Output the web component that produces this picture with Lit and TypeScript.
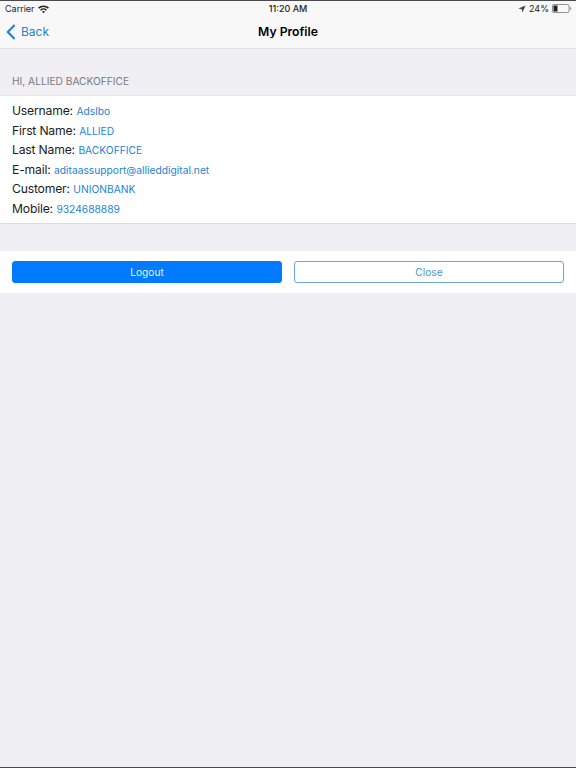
import { LitElement, html, css } from "lit";
import { customElement } from "lit/decorators.js";

const rows: [string, string][] = [
  ["Username:", "Adslbo"],
  ["First Name:", "ALLIED"],
  ["Last Name:", "BACKOFFICE"],
  ["E-mail:", "aditaassupport@allieddigital.net"],
  ["Customer:", "UNIONBANK"],
  ["Mobile:", "9324688889"],
];

@customElement("app-root")
export class AppRoot extends LitElement {
  static styles = css`
    :host {
      display: flex;
      flex-direction: column;
      height: 768px;
      box-sizing: border-box;
      background: #f0eff4;
      border-top: 1px solid #4a4a4c;
      border-bottom: 1px solid #4a4a4c;
      font-family: Inter, "Liberation Sans", sans-serif;
      color: #000;
      overflow: hidden;
    }
    .top {
      background: #f8f8f9;
      border-bottom: 1px solid #e2e2e4;
      height: 48px;
      box-sizing: border-box;
    }
    .status {
      height: 15px;
      display: grid;
      grid-template-columns: 1fr auto 1fr;
      align-items: center;
      padding: 0 5px;
      font-size: 9px;
      color: #222;
    }
    .status .left, .status .right { display: flex; align-items: center; }
    .status .left { gap: 3px; }
    .status .right { gap: 3px; justify-content: flex-end; margin-right: -1px; }
    .status .time { font-weight: 500; }
    .nav {
      height: 31px;
      display: grid;
      grid-template-columns: 1fr auto 1fr;
      align-items: center;
      padding: 0 6px;
    }
    .back {
      display: flex;
      align-items: center;
      gap: 5px;
      color: #2384d8;
      font-size: 12px;
    }
    .title { font-size: 12.2px; font-weight: 600; }
    .section {
      padding: 26px 12px 0;
      font-size: 10.2px;
      line-height: 12px;
      color: #7a7a7f;
      height: 46px;
      box-sizing: border-box;
    }
    .card {
      background: #fff;
      border-top: 1px solid #e8e8eb;
      border-bottom: 1px solid #dcdcdf;
      padding: 5px 12px 0;
      height: 129px;
      box-sizing: border-box;
    }
    .row {
      height: 19.5px;
      display: flex;
      align-items: center;
      gap: 3.5px;
      font-size: 12.2px;
      letter-spacing: -0.2px;
      color: #1c1c1e;
    }
    .row span { font-size: 10.25px; letter-spacing: 0; color: #2384d8; padding-top: 1px; }
    .actions {
      margin-top: 27px;
      background: #fff;
      height: 42px;
      box-sizing: border-box;
      padding: 10px 12px;
      display: grid;
      grid-template-columns: 270px 270px;
      gap: 12px;
    }
    .btn {
      height: 22px;
      box-sizing: border-box;
      border-radius: 3px;
      border: 1px solid #007aff;
      display: flex;
      align-items: center;
      justify-content: center;
      font-size: 10.2px;
    }
    .primary { background: #007aff; color: #e4f0ff; }
    .ghost { background: #fff; color: #4a96dc; border-color: #6aa5dc; }
  `;

  render() {
    return html`
      <div class="top">
        <div class="status">
          <div class="left">
            <span>Carrier</span>
            <svg width="11" height="8" viewBox="0 0 11 8" fill="#222">
              <path d="M0 2.6A8 8 0 0 1 11 2.6L9.9 3.8A6.4 6.4 0 0 0 1.1 3.8Z" />
              <path d="M2 4.7A5 5 0 0 1 9 4.7L7.9 5.8A3.4 3.4 0 0 0 3.1 5.8Z" />
              <path d="M4 6.7A2.2 2.2 0 0 1 7 6.7L5.500 8.200Z" />
            </svg>
          </div>
          <div class="time">11:20 AM</div>
          <div class="right">
            <svg width="8" height="8" viewBox="0 0 8 8" fill="#444">
              <path d="M7.600 0.400 0.400 3.600 3.800 4.200 4.400 7.600Z" />
            </svg>
            <span>24%</span>
            <svg width="20" height="9" viewBox="0 0 20 9">
              <rect x="0.500" y="0.500" width="16.500" height="8" rx="1.500" fill="none" stroke="#777" stroke-width="0.8" />
              <rect x="1.500" y="1.500" width="4" height="6" fill="#222" />
              <path d="M18 3v3c.8-.2 1.200-.8 1.200-1.500S18.800 3.200 18 3Z" fill="#888" />
            </svg>
          </div>
        </div>
        <div class="nav">
          <div class="back">
            <svg width="10" height="16" viewBox="0 0 10 16" fill="none" stroke="#2384d8" stroke-width="2.2">
              <path d="M8.600 1 1.800 8l6.800 7" />
            </svg>
            Back
          </div>
          <div class="title">My Profile</div>
          <div></div>
        </div>
      </div>
      <div class="section">HI, ALLIED BACKOFFICE</div>
      <div class="card">
        ${rows.map(([k, v]) => html`<div class="row">${k} <span>${v}</span></div>`)}
      </div>
      <div class="actions">
        <div class="btn primary">Logout</div>
        <div class="btn ghost">Close</div>
      </div>
    `;
  }
}
